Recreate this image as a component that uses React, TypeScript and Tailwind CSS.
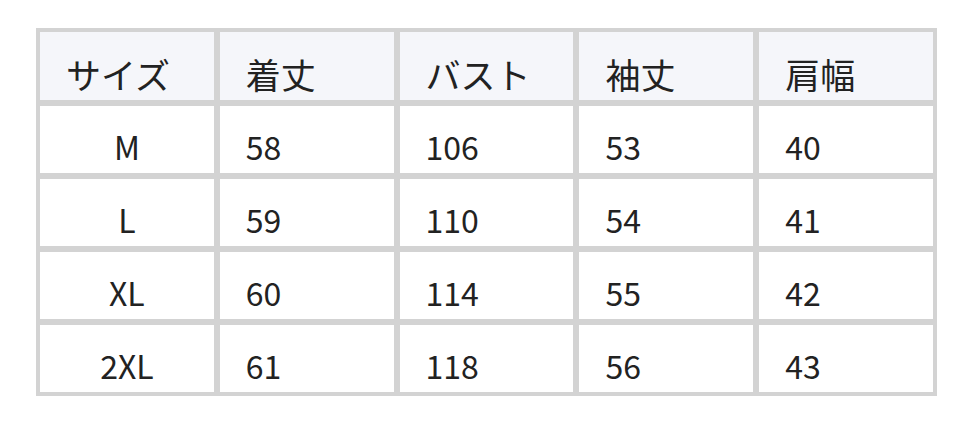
const HEAD = ["サイズ", "着丈", "バスト", "袖丈", "肩幅"];

const ROWS = [
  ["M", "58", "106", "53", "40"],
  ["L", "59", "110", "54", "41"],
  ["XL", "60", "114", "55", "42"],
  ["2XL", "61", "118", "56", "43"],
];

export default function App() {
  return (
    <div className="h-[422px] w-[972px] bg-white pl-[36px] pt-[28px] font-['Noto_Sans_CJK_JP',sans-serif] text-[#222]">
      <table className="w-[901px] table-fixed border-separate border-spacing-0 border border-[#d3d3d3]">
        <thead>
          <tr>
            {HEAD.map((h) => (
              <th
                key={h}
                className="h-[74px] border-[3px] border-[#d3d3d3] bg-[#f5f6fa] pb-[3px] pl-[26px] text-left align-bottom text-[35px] leading-[46px] font-normal"
              >
                {h}
              </th>
            ))}
          </tr>
        </thead>
        <tbody>
          {ROWS.map((r) => (
            <tr key={r[0]}>
              {r.map((c, i) => (
                <td
                  key={i}
                  className={
                    "h-[73px] border-[3px] border-[#d3d3d3] pb-[4px] align-bottom text-[32px] leading-[46px] " +
                    (i === 0 ? "text-center" : "pl-[26px] text-left")
                  }
                >
                  {c}
                </td>
              ))}
            </tr>
          ))}
        </tbody>
      </table>
    </div>
  );
}
